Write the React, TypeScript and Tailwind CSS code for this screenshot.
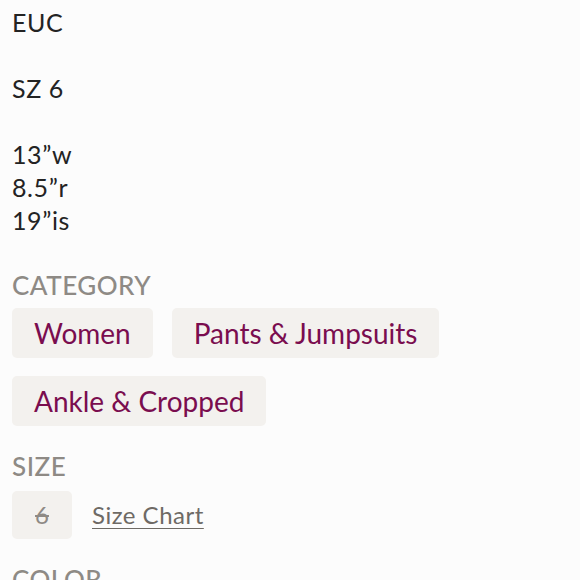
const chip =
  "h-[50px] px-[22px] flex items-center rounded-[5px] bg-[#f3f1ee] text-[28px] leading-none text-[#7a0d4f]";

const label = "text-[26px] leading-[33px] font-medium text-[#8e8a85] tracking-[0.5px]";

export default function App() {
  return (
    <div
      className="h-[580px] bg-[#fcfcfc] px-3 pt-[6px] overflow-hidden"
      style={{ fontFamily: "Lato, 'Open Sans', sans-serif" }}
    >
      {/* description */}
      <p className="whitespace-pre-line text-[25px] leading-[33px] text-[#232323] tracking-[0.6px]">
        {"EUC\n\nSZ 6\n\n13”w\n8.5”r\n19”is"}
      </p>

      <div className="mt-[32px]">
        <div className={label}>CATEGORY</div>
        <div className="mt-[6px] flex flex-wrap gap-x-[19px] gap-y-[18px]">
          <span className={chip}>Women</span>
          <span className={chip}>Pants &amp; Jumpsuits</span>
          <span className={chip}>Ankle &amp; Cropped</span>
        </div>

        <div className={`${label} mt-[24px]`}>SIZE</div>
        <div className="mt-[8px] flex items-center gap-[20px]">
          <span className="w-[60px] h-[48px] flex items-center justify-center rounded-[5px] bg-[#f3f1ee] text-[24px] text-[#8e8a85] line-through">
            6
          </span>
          <a className="text-[24px] text-[#6e6a65] tracking-[0.5px] underline underline-offset-[4px] decoration-1">
            Size Chart
          </a>
        </div>

        <div className={`${label} mt-[24px]`}>COLOR</div>
      </div>
    </div>
  );
}
